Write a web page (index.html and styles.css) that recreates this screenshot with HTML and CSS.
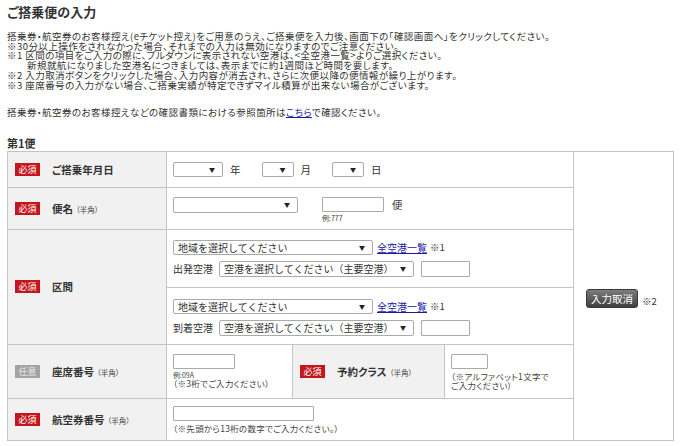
FILE: index.html
```html
<!DOCTYPE html>
<html lang="ja">

<head>
     <meta charset="UTF-8">
     <meta name="viewport" content="width=device-width, initial-scale=1.0">
     <title>ご搭乗便の入力</title>
     <link rel="stylesheet" href="styles.css">
</head>

<body>

     <h1 class="page-title">ご搭乗便の入力</h1>

     <div class="notes">
          <p>搭乗券・航空券のお客様控え(eチケット控え)をご用意のうえ、ご搭乗便を入力後、画面下の「確認画面へ」をクリックしてください。</p>
          <p>※30分以上操作をされなかった場合、それまでの入力は無効になりますのでご注意ください。</p>
          <p>※1 区間の項目をご入力の際に、プルダウンに表示されない空港は、&lt;全空港一覧&gt;よりご選択ください。</p>
          <p class="indent">新規就航になりました空港名につきましては、表示までに約1週間ほど時間を要します。</p>
          <p>※2 入力取消ボタンをクリックした場合、入力内容が消去され、さらに次便以降の便情報が繰り上がります。</p>
          <p>※3 座席番号の入力がない場合、ご搭乗実績が特定できずマイル積算が出来ない場合がございます。</p>
     </div>

     <p class="notes notes-ref">搭乗券・航空券のお客様控えなどの確認書類における参照箇所は<a href="#">こちら</a>で確認ください。</p>

     <h2 class="flight-title">第1便</h2>

     <table class="flight-table">
          <colgroup>
               <col style="width: 159px">
               <col style="width: 126px">
               <col style="width: 152px">
               <col style="width: 129px">
               <col style="width: 100px">
          </colgroup>

          <tr class="row-date">
               <th class="label-cell"><span class="badge">必須</span>ご搭乗年月日</th>
               <td class="field-cell" colspan="3">
                    <div class="field-line">
                         <span class="select w-year"><select><option></option></select></span>
                         <span class="unit">年</span>
                         <span class="select w-small"><select><option></option></select></span>
                         <span class="unit">月</span>
                         <span class="select w-small"><select><option></option></select></span>
                         <span class="unit">日</span>
                    </div>
               </td>
               <td class="side-cell" rowspan="5">
                    <button class="btn-cancel">入力取消</button><span class="side-note">※2</span>
               </td>
          </tr>

          <tr class="row-flight">
               <th class="label-cell"><span class="badge">必須</span>便名<small>（半角）</small></th>
               <td class="field-cell top" colspan="3">
                    <div class="field-line start">
                         <span class="select w-flight"><select><option></option></select></span>
                         <div class="input-group">
                              <input class="text-input w-num" type="text">
                              <span class="tiny">例:777</span>
                         </div>
                         <span class="unit">便</span>
                    </div>
               </td>
          </tr>

          <tr class="row-route">
               <th class="label-cell"><span class="badge">必須</span>区間</th>
               <td class="route-cell" colspan="3">
                    <div class="route-block">
                         <div class="field-line">
                              <span class="select w-area"><select><option>地域を選択してください</option></select></span>
                              <a class="all-link" href="#">全空港一覧</a><span class="mark">※1</span>
                         </div>
                         <div class="field-line second">
                              <span class="route-name">出発空港</span>
                              <span class="select w-airport"><select><option>空港を選択してください（主要空港）</option></select></span>
                              <input class="text-input w-code" type="text">
                         </div>
                    </div>
                    <div class="route-block">
                         <div class="field-line">
                              <span class="select w-area"><select><option>地域を選択してください</option></select></span>
                              <a class="all-link" href="#">全空港一覧</a><span class="mark">※1</span>
                         </div>
                         <div class="field-line second">
                              <span class="route-name">到着空港</span>
                              <span class="select w-airport"><select><option>空港を選択してください（主要空港）</option></select></span>
                              <input class="text-input w-code" type="text">
                         </div>
                    </div>
               </td>
          </tr>

          <tr class="row-seat">
               <th class="label-cell"><span class="badge optional">任意</span>座席番号<small>（半角）</small></th>
               <td class="field-cell top">
                    <input class="text-input w-num" type="text">
                    <p class="tiny">例:09A</p>
                    <p class="hint">（※3桁でご入力ください）</p>
               </td>
               <th class="label-cell"><span class="badge">必須</span>予約クラス<small>（半角）</small></th>
               <td class="field-cell top">
                    <input class="text-input w-class" type="text">
                    <p class="hint lines">（※アルファベット1文字で<br>ご入力ください）</p>
               </td>
          </tr>

          <tr class="row-ticket">
               <th class="label-cell"><span class="badge">必須</span>航空券番号<small>（半角）</small></th>
               <td class="field-cell top" colspan="3">
                    <input class="text-input w-ticket" type="text">
                    <p class="hint">（※先頭から13桁の数字でご入力ください。）</p>
               </td>
          </tr>
     </table>

</body>

</html>
```

FILE: styles.css
```css
* {
     box-sizing: border-box;
     margin: 0;
     padding: 0;
}

html {
     font-family: "Noto Sans CJK JP", "Noto Sans", sans-serif;
     font-feature-settings: "palt";
     color: #333;
     background: #fff;
}

body {
     padding: 4px 7px 0;
}

a {
     color: #1a1aa6;
}

.page-title {
     font-size: 13px;
     line-height: 16px;
     font-weight: bold;
}

.notes {
     margin-top: 12px;
     font-size: 9.5px;
     line-height: 9.7px;
     letter-spacing: 0.45px;
}

.notes .indent {
     padding-left: 20px;
}

.notes-ref {
     margin-top: 18px;
}

.flight-title {
     margin-top: 19px;
     font-size: 11px;
     line-height: 12px;
     font-weight: bold;
}

.flight-table {
     width: 666px;
     margin-top: 2px;
     border-collapse: collapse;
     table-layout: fixed;
}

.flight-table th,
.flight-table td {
     border: 1px solid #c4c4c4;
}

.label-cell {
     background: #f1f1f1;
     text-align: left;
     font-size: 10.5px;
     font-weight: bold;
     padding-left: 7px;
     white-space: nowrap;
}

.label-cell small {
     margin-left: 3px;
     font-size: 7.5px;
     font-weight: normal;
     color: #444;
}

.badge {
     display: inline-block;
     width: 25px;
     height: 13px;
     margin-right: 12px;
     background: #c4161c;
     color: #fff;
     font-size: 9px;
     line-height: 13px;
     text-align: center;
     font-weight: normal;
     vertical-align: 1px;
}

.badge.optional {
     background: #a3a3a3;
     color: #e6e6e6;
}

.row-date th,
.row-date td {
     height: 36px;
}

.row-flight th,
.row-flight td {
     height: 42px;
}

.row-route th,
.row-route td {
     height: 114px;
}

.row-seat th,
.row-seat td {
     height: 54px;
}

.row-ticket th,
.row-ticket td {
     height: 42px;
}

.field-cell {
     padding: 0 6px;
     font-size: 10px;
     vertical-align: middle;
}

.field-cell.top {
     vertical-align: top;
     padding-top: 9px;
}

.row-ticket .field-cell.top {
     padding-top: 7px;
}

.field-line {
     display: flex;
     align-items: center;
     font-size: 10px;
}

.field-line.start {
     align-items: flex-start;
}

.field-line.second {
     margin-top: 6px;
}

.select {
     position: relative;
     display: inline-block;
     height: 15px;
}

.select select {
     appearance: none;
     -webkit-appearance: none;
     width: 100%;
     height: 100%;
     border: 1px solid #aaa;
     border-radius: 2px;
     background: #fff;
     font-family: inherit;
     font-size: 10px;
     line-height: 13px;
     color: #333;
     padding: 0 16px 0 4px;
}

.select::after {
     content: "▼";
     position: absolute;
     right: 8px;
     top: 4px;
     font-size: 6px;
     line-height: 7px;
     color: #222;
     pointer-events: none;
}

.w-year {
     width: 50px;
}

.w-small {
     width: 32px;
}

.w-flight {
     width: 125px;
     height: 16px;
}

.w-area {
     width: 200px;
}

.w-airport {
     width: 195px;
     height: 16px;
}

.unit {
     margin: 0 21px 0 7px;
     font-size: 10.5px;
}

.text-input {
     display: block;
     height: 15px;
     border: 1px solid #aaa;
     border-radius: 1px;
     background: #fff;
}

.w-num {
     width: 62px;
}

.w-code {
     width: 49px;
     height: 16px;
     margin-left: 7px;
}

.w-class {
     width: 37px;
}

.w-ticket {
     width: 141px;
}

.input-group {
     display: flex;
     flex-direction: column;
     margin-left: 24px;
}

.row-flight .unit {
     margin-left: 8px;
     line-height: 16px;
}

.tiny {
     font-size: 7px;
     line-height: 8px;
     margin-top: 2px;
     color: #444;
}

.hint {
     font-size: 8.5px;
     line-height: 9px;
     color: #444;
     letter-spacing: 0.3px;
}

.hint.lines {
     margin-top: 3px;
     line-height: 9.5px;
}

.row-ticket .hint {
     margin-top: 3px;
}

.route-cell {
     padding: 0;
     vertical-align: top;
}

.route-block {
     height: 57px;
     padding: 10px 6px 0;
}

.route-block+.route-block {
     border-top: 1px solid #c4c4c4;
     padding-top: 11px;
}

.all-link {
     margin-left: 4px;
     font-size: 10px;
}

.mark {
     margin-left: 3px;
     font-size: 9.5px;
}

.route-name {
     margin-right: 6px;
     font-size: 10px;
}

.side-cell {
     padding-left: 12px;
     vertical-align: middle;
     white-space: nowrap;
}

.btn-cancel {
     width: 52px;
     height: 19px;
     border: 1px solid #3a3a3a;
     border-radius: 3px;
     background: linear-gradient(#7d7d7d, #3f3f3f);
     color: #fff;
     font-family: inherit;
     font-size: 10.5px;
     line-height: 17px;
     vertical-align: middle;
}

.side-note {
     margin-left: 4px;
     font-size: 9.5px;
     vertical-align: -3px;
}
```
